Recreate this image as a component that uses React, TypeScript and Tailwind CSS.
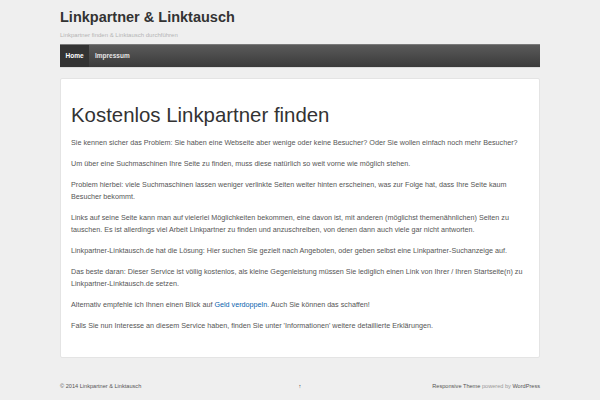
import React from "react";

const paras: React.ReactNode[] = [
  "Sie kennen sicher das Problem: Sie haben eine Webseite aber wenige oder keine Besucher? Oder Sie wollen einfach noch mehr Besucher?",
  "Um über eine Suchmaschinen Ihre Seite zu finden, muss diese natürlich so weit vorne wie möglich stehen.",
  "Problem hierbei: viele Suchmaschinen lassen weniger verlinkte Seiten weiter hinten erscheinen, was zur Folge hat, dass Ihre Seite kaum Besucher bekommt.",
  "Links auf seine Seite kann man auf vielerlei Möglichkeiten bekommen, eine davon ist, mit anderen (möglichst themenähnlichen) Seiten zu tauschen. Es ist allerdings viel Arbeit Linkpartner zu finden und anzuschreiben, von denen dann auch viele gar nicht antworten.",
  "Linkpartner-Linktausch.de hat die Lösung: Hier suchen Sie gezielt nach Angeboten, oder geben selbst eine Linkpartner-Suchanzeige auf.",
  "Das beste daran: Dieser Service ist völlig kostenlos, als kleine Gegenleistung müssen Sie lediglich einen Link von Ihrer / Ihren Startseite(n) zu Linkpartner-Linktausch.de setzen.",
  <>
    Alternativ empfehle ich Ihnen einen Blick auf{" "}
    <a className="text-[#0a5fad]">Geld verdoppeln</a>. Auch Sie können das schaffen!
  </>,
  "Falls Sie nun Interesse an diesem Service haben, finden Sie unter 'Informationen' weitere detaillierte Erklärungen.",
];

export default function App() {
  return (
    <div
      className="w-[600px] h-[400px] bg-[#efefef] overflow-hidden"
      style={{ fontFamily: '"Liberation Sans", Arial, sans-serif' }}
    >
      <div className="w-[480px] mx-auto">
        <header className="pt-[8px]">
          <div className="text-[14.5px] leading-[18px] font-bold text-[#333]">
            Linkpartner &amp; Linktausch
          </div>
          <div className="mt-[5px] text-[6px] leading-[8px] text-[#b5b5b5]">
            Linkpartner finden &amp; Linktausch durchführen
          </div>
        </header>
        <nav className="mt-[5px] h-[23px] flex items-stretch border-t border-[#7a7a7a] bg-gradient-to-b from-[#5a5a5a] to-[#3b3b3b] shadow-[0_1px_0_#dcdcdc]">
          <div className="w-[29px] flex items-center justify-center bg-[#333] text-white text-[6.5px] font-bold">
            Home
          </div>
          <div className="px-[6px] flex items-center text-[#e6e6e6] text-[6.5px] font-bold">
            Impressum
          </div>
        </nav>
        <main className="mt-[11px] h-[280px] bg-white border border-[#e4e4e4] rounded-[2px] px-[10px] pt-[24px]">
          <h1 className="text-[20.4px] leading-[24px] text-[#333] mb-[10px]">
            Kostenlos Linkpartner finden
          </h1>
          <div className="text-[7.2px] leading-[12.5px] text-[#555]">
            {paras.map((p, i) => (
              <p key={i} className="mb-[8.3px]">
                {p}
              </p>
            ))}
          </div>
        </main>
        <footer className="mt-[24px] flex items-center justify-between text-[5.6px] leading-[8px] text-[#555]">
          <div className="w-[160px]">© 2014 Linkpartner &amp; Linktausch</div>
          <div className="text-[#333]">↑</div>
          <div className="w-[160px] text-right text-[#999]">
            <span className="text-[#555]">Responsive Theme</span> powered by{" "}
            <span className="text-[#555]">WordPress</span>
          </div>
        </footer>
      </div>
    </div>
  );
}
